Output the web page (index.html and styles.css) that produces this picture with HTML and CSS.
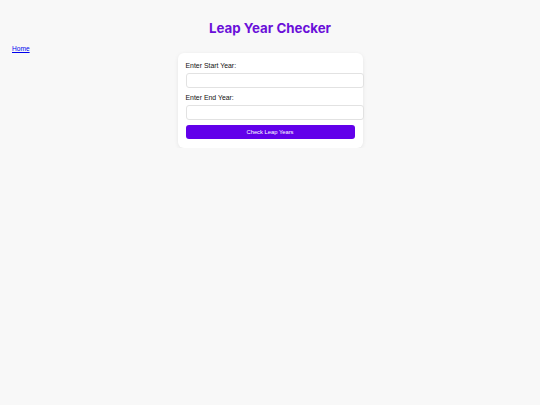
FILE: index.html
```html
<!DOCTYPE html>
<html>
<head>
<meta charset="utf-8">
<link rel="stylesheet" href="styles.css">
</head>
<body>
<h1 class="title">Leap Year Checker</h1>
<a class="home" href="#">Home</a>
<div class="card">
  <label class="label" for="start">Enter Start Year:</label>
  <input class="field" id="start" type="number">
  <label class="label" for="end">Enter End Year:</label>
  <input class="field" id="end" type="number">
  <button class="btn">Check Leap Years</button>
</div>
</body>
</html>
```
FILE: styles.css
```css
html, body {
  margin: 0;
  background: #f8f8f8;
}
body {
  padding: 0 12px;
  font-family: Inter, "Liberation Sans", Arial, sans-serif;
  color: #222;
}
.title {
  margin: 20px 0 7px;
  text-align: center;
  font-size: 13.3px;
  line-height: 17px;
  font-weight: 700;
  color: #6a0fd9;
}
.home {
  display: block;
  width: max-content;
  font-family: "Liberation Sans", Arial, sans-serif;
  font-size: 6.6px;
  line-height: 9px;
  color: #0000ee;
}
.card {
  width: 169px;
  margin: 0 auto;
  padding: 8px 8px 9px;
  background: #fff;
  border-radius: 6px;
  box-shadow: 0 1px 4px rgba(0,0,0,0.08);
}
.label {
  display: block;
  font-family: "Liberation Sans", Arial, sans-serif;
  font-size: 6.9px;
  line-height: 9px;
  margin-bottom: 3px;
  color: #111;
}
.field {
  display: block;
  width: 178px;
  height: 15px;
  margin: 0 0 5px;
  padding: 3px 4px;
  border: 1px solid #e2e2e2;
  border-radius: 3px;
  background: #fff;
  font-size: 7px;
  box-sizing: border-box;
}
.btn {
  display: block;
  width: 169px;
  height: 14px;
  padding: 0;
  border: none;
  border-radius: 3px;
  background: #6200ea;
  color: #fff;
  font-family: "Liberation Sans", Arial, sans-serif;
  font-size: 5.8px;
}
```
